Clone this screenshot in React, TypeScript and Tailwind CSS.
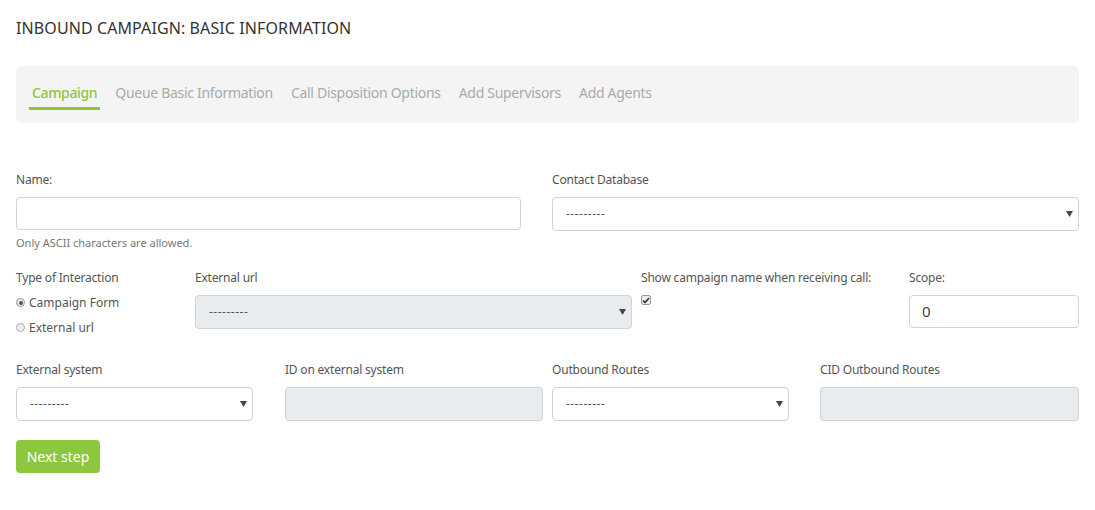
import React from "react";

const font = { fontFamily: "'Noto Sans', 'Open Sans', sans-serif" };

function Caret() {
  return (
    <svg width="7" height="6" viewBox="0 0 7 6" className="absolute right-[5px] top-1/2 -translate-y-1/2">
      <path d="M0 0 L7 0 L3.5 6 Z" fill="#444" />
    </svg>
  );
}

function Select({ disabled = false, w }: { disabled?: boolean; w: string }) {
  return (
    <div
      className={`relative h-[34px] ${w} rounded-[4px] border border-[#ced4da] ${disabled ? "bg-[#e9ecef]" : "bg-white"} flex items-center pl-[13px] text-[12px] text-[#555]`}
    >
      <span className="tracking-[0.5px]">---------</span>
      <Caret />
    </div>
  );
}

function Label({ children }: { children: React.ReactNode }) {
  return <div className="text-[12px] leading-[16px] text-[#555] mb-[9px] tracking-[-0.2px]">{children}</div>;
}

export default function App() {
  return (
    <div className="bg-white w-[1095px] h-[510px] px-[16px] pt-[18px]" style={font}>
      <h1 className="text-[16px] leading-[20px] text-[#333] tracking-[0.1px]">INBOUND CAMPAIGN: BASIC INFORMATION</h1>
      <div className="mt-[28px] w-[1063px] h-[57px] bg-[#f4f4f4] rounded-[5px] flex items-start pl-[13px] pt-[16px] gap-[12px]">
        <div className="px-[3px] border-b-[3px] border-[#8dc63f] text-[#8dc63f] text-[14px] leading-[22px] pb-[3px] font-medium tracking-[-0.35px]">Campaign</div>
        {["Queue Basic Information", "Call Disposition Options", "Add Supervisors", "Add Agents"].map((t) => (
          <div key={t} className="px-[3px] text-[#aaa] text-[14px] leading-[22px] tracking-[-0.3px]">{t}</div>
        ))}
      </div>

      <div className="mt-[49px] flex gap-[31px]">
        <div className="w-[505px]">
          <Label>Name:</Label>
          <div className="h-[33px] rounded-[4px] border border-[#ced4da] bg-white" />
          <div className="mt-[6px] text-[11px] leading-[14px] text-[#777]">Only ASCII characters are allowed.</div>
        </div>
        <div className="w-[527px]">
          <Label>Contact Database</Label>
          <Select w="w-full" />
        </div>
      </div>

      <div className="mt-[20px] flex">
        <div className="w-[179px]">
          <Label>Type of Interaction</Label>
          <div className="flex flex-col gap-[10px] text-[12px] leading-[15px] text-[#555]">
            <div className="flex items-center gap-[4px]">
              <span className="w-[9px] h-[9px] rounded-full border border-[#999] bg-[#eee] flex items-center justify-center">
                <span className="w-[4px] h-[4px] rounded-full bg-[#555]" />
              </span>
              Campaign Form
            </div>
            <div className="flex items-center gap-[4px]">
              <span className="w-[9px] h-[9px] rounded-full border border-[#aaa] bg-[#eee]" />
              External url
            </div>
          </div>
        </div>
        <div className="w-[437px]">
          <Label>External url</Label>
          <Select disabled w="w-full" />
        </div>
        <div className="ml-[9px] w-[268px]">
          <Label>Show campaign name when receiving call:</Label>
          <div className="w-[10px] h-[10px] rounded-[2px] border border-[#999] bg-[#eee] flex items-center justify-center">
            <svg width="8" height="7" viewBox="0 0 8 7"><path d="M1 3.5 L3 5.5 L7 1" stroke="#333" strokeWidth="1.6" fill="none" /></svg>
          </div>
        </div>
        <div className="w-[170px]">
          <Label>Scope:</Label>
          <div className="h-[33px] rounded-[4px] border border-[#ced4da] bg-white flex items-center pl-[12px] text-[15px] text-[#444]">0</div>
        </div>
      </div>

      <div className="mt-[27px] flex">
        <div className="w-[237px]">
          <Label>External system</Label>
          <Select w="w-full" />
        </div>
        <div className="ml-[32px] w-[258px]">
          <Label>ID on external system</Label>
          <div className="h-[34px] rounded-[4px] border border-[#ced4da] bg-[#e9ecef]" />
        </div>
        <div className="ml-[9px] w-[237px]">
          <Label>Outbound Routes</Label>
          <Select w="w-full" />
        </div>
        <div className="ml-[31px] w-[259px]">
          <Label>CID Outbound Routes</Label>
          <div className="h-[34px] rounded-[4px] border border-[#ced4da] bg-[#e9ecef]" />
        </div>
      </div>

      <button className="mt-[19px] h-[33px] w-[84px] rounded-[4px] bg-[#8dc63f] text-white text-[14px]">Next step</button>
    </div>
  );
}
